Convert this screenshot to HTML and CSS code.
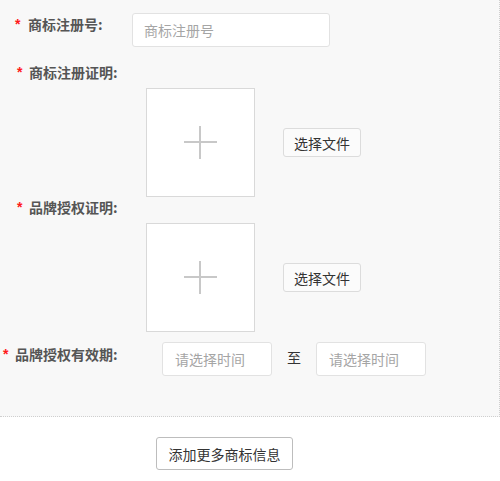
FILE: index.html
```html
<!DOCTYPE html>
<html lang="zh-CN">
<head>
<meta charset="utf-8">
<title>商标信息</title>
<link rel="stylesheet" href="styles.css">
</head>
<body>
<div class="panel">
  <div class="row row-reg">
    <label class="label label-reg"><span class="req">*</span>商标注册号:</label>
    <input class="text-input input-reg" type="text" placeholder="商标注册号">
  </div>

  <div class="row row-cert">
    <label class="label label-cert"><span class="req">*</span>商标注册证明:</label>
  </div>
  <div class="upload-row upload-first">
    <div class="upload-box"><span class="plus"></span></div>
    <button class="file-btn" type="button">选择文件</button>
  </div>

  <div class="row row-auth">
    <label class="label label-cert"><span class="req">*</span>品牌授权证明:</label>
  </div>
  <div class="upload-row upload-second">
    <div class="upload-box"><span class="plus"></span></div>
    <button class="file-btn" type="button">选择文件</button>
  </div>

  <div class="row row-date">
    <label class="label label-date"><span class="req">*</span>品牌授权有效期:</label>
    <div class="date-group">
      <input class="text-input date-input" type="text" placeholder="请选择时间">
      <span class="to">至</span>
      <input class="text-input date-input" type="text" placeholder="请选择时间">
    </div>
  </div>
</div>
<div class="footer">
  <button class="more-btn" type="button">添加更多商标信息</button>
</div>
</body>
</html>
```

FILE: styles.css
```css
html, body {
  margin: 0;
  padding: 0;
  background: #ffffff;
}

body {
  font-family: "Liberation Sans", "Noto Sans CJK SC", sans-serif;
  font-size: 14px;
  color: #333;
}

.panel {
  width: 499px;
  height: 403px;
  background: #f8f8f8;
  border-right: 1px dotted #cfcfcf;
  border-bottom: 1px dotted #cfcfcf;
  padding-top: 13px;
  box-sizing: content-box;
}

.row {
  display: flex;
  align-items: flex-start;
}

.label {
  display: block;
  font-family: "Noto Sans CJK SC", sans-serif;
  font-weight: 700;
  font-size: 14px;
  line-height: 20px;
  color: #555;
  white-space: nowrap;
}

.req {
  display: inline-block;
  width: 13px;
  color: #ff1a1a;
  font-family: "Liberation Sans", sans-serif;
  font-weight: 700;
  font-size: 14px;
  vertical-align: top;
  line-height: 20px;
}

.label-reg {
  margin-left: 15px;
  width: 117px;
  margin-top: 1px;
}

.label-cert {
  margin-left: 17px;
}
.label-cert .req {
  width: 12px;
}

.label-date {
  margin-left: 3px;
  width: 159px;
  margin-top: 2px;
}
.label-date .req {
  width: 12px;
}

.text-input {
  box-sizing: border-box;
  height: 34px;
  border: 1px solid #e2e2e2;
  border-radius: 3px;
  background: #fff;
  font-family: "Noto Sans CJK SC", sans-serif;
  font-size: 14px;
  color: #333;
  outline: none;
  margin: 0;
}
.text-input::placeholder {
  color: #a5a5a5;
}

.input-reg {
  width: 198px;
  padding: 0 11px;
}

.row-cert {
  margin-top: 15px;
}

.upload-row {
  display: flex;
  align-items: center;
  margin-left: 146px;
}
.upload-first {
  margin-top: 6px;
}
.upload-second {
  margin-top: 6px;
}

.upload-box {
  box-sizing: border-box;
  width: 109px;
  height: 109px;
  background: #fff;
  border: 1px solid #d9d9d9;
  display: flex;
  align-items: center;
  justify-content: center;
}

.plus {
  position: relative;
  display: block;
  width: 33px;
  height: 33px;
}
.plus::before,
.plus::after {
  content: "";
  position: absolute;
  background: #c8c8c8;
}
.plus::before {
  left: 0;
  top: 15px;
  width: 33px;
  height: 2px;
}
.plus::after {
  left: 15px;
  top: 0;
  width: 2px;
  height: 33px;
}

.file-btn {
  box-sizing: border-box;
  margin: 0 0 0 28px;
  width: 78px;
  height: 29px;
  padding: 0;
  background: #fbfbfb;
  border: 1px solid #dcdcdc;
  border-radius: 3px;
  font-family: "Noto Sans CJK SC", sans-serif;
  font-size: 14px;
  color: #333;
}

.row-auth {
  margin-top: 0;
}

.row-date {
  margin-top: 10px;
}

.date-group {
  display: flex;
  align-items: center;
}

.date-input {
  width: 110px;
  padding: 0 12px;
}

.to {
  margin: 0 15px;
  font-family: "Noto Sans CJK SC", sans-serif;
  font-size: 14px;
  color: #333;
  line-height: 20px;
  position: relative;
  top: -2px;
}

.footer {
  padding-top: 20px;
  padding-left: 156px;
}

.more-btn {
  box-sizing: border-box;
  margin: 0;
  width: 137px;
  height: 33px;
  padding: 0;
  background: #fff;
  border: 1px solid #bdbdbd;
  border-radius: 3px;
  font-family: "Noto Sans CJK SC", sans-serif;
  font-size: 14px;
  color: #333;
}
```
